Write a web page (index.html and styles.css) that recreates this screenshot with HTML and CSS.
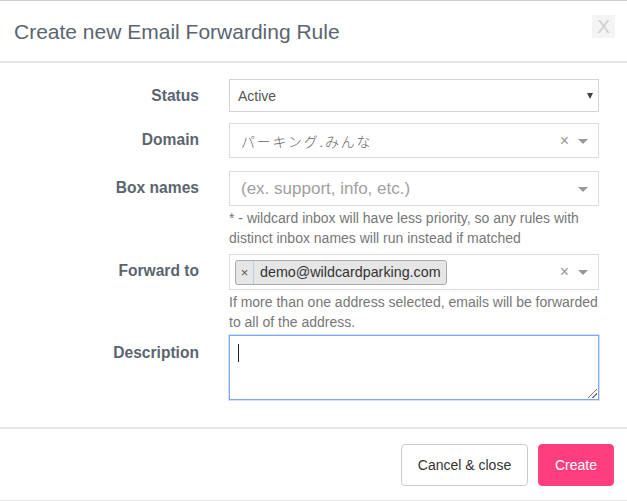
FILE: index.html
```html
<!DOCTYPE html>
<html>
<head>
<meta charset="utf-8">
<link rel="stylesheet" href="styles.css">
</head>
<body>
<div class="modal">
  <div class="modal-header">
    <h1 class="title">Create new Email Forwarding Rule</h1>
    <span class="close">X</span>
  </div>
  <div class="modal-body">
    <div class="row row-status">
      <label class="label">Status</label>
      <div class="field">
        <div class="select native">
          <span class="value">Active</span>
          <span class="native-arrow"></span>
        </div>
      </div>
    </div>
    <div class="row row-domain">
      <label class="label">Domain</label>
      <div class="field">
        <div class="select s2">
          <span class="value jp">パーキング.みんな</span>
          <span class="clear">×</span>
          <span class="arrow"></span>
        </div>
      </div>
    </div>
    <div class="row row-box">
      <label class="label">Box names</label>
      <div class="field">
        <div class="select s2">
          <span class="value placeholder">(ex. support, info, etc.)</span>
          <span class="arrow"></span>
        </div>
        <p class="help">* - wildcard inbox will have less priority, so any rules with distinct inbox names will run instead if matched</p>
      </div>
    </div>
    <div class="row row-forward">
      <label class="label">Forward to</label>
      <div class="field">
        <div class="select s2 multi">
          <span class="tag"><span class="tag-x">×</span><span class="tag-text">demo@wildcardparking.com</span></span>
          <span class="spacer"></span>
          <span class="clear">×</span>
          <span class="arrow"></span>
        </div>
        <p class="help">If more than one address selected, emails will be forwarded to all of the address.</p>
      </div>
    </div>
    <div class="row row-desc">
      <label class="label">Description</label>
      <div class="field">
        <div class="textarea"><span class="caret"></span><span class="grip"></span></div>
      </div>
    </div>
  </div>
  <div class="modal-footer">
    <button class="btn btn-cancel">Cancel &amp; close</button>
    <button class="btn btn-create">Create</button>
  </div>
</div>
</body>
</html>
```
FILE: styles.css
```css
* { box-sizing: border-box; }
html, body { margin: 0; padding: 0; background: #fff; }
body {
  font-family: "Liberation Sans", Arial, "Noto Sans CJK JP", sans-serif;
  width: 627px;
  height: 501px;
  overflow: hidden;
}
.modal {
  border-top: 1px solid #cfcfcf;
  border-bottom: 1px solid #e3e3e3;
  height: 501px;
  display: flex;
  flex-direction: column;
}
.modal-header {
  height: 62px;
  display: flex;
  align-items: center;
  justify-content: space-between;
  padding: 0 12px 0 14px;
  border-bottom: 2px solid #e6e6e6;
}
.title {
  margin: 0;
  font-weight: normal;
  font-size: 21px;
  color: #5b6570;
  padding-top: 2px;
}
.close {
  width: 23px;
  height: 23px;
  background: #f4f4f4;
  color: #cfcfcf;
  font-size: 19px;
  line-height: 23px;
  text-align: center;
  margin-top: -9px;
}
.modal-body {
  padding: 16px 0 0 0;
  flex: 1;
}
.row {
  display: flex;
  align-items: flex-start;
}
.label {
  width: 199px;
  text-align: right;
  font-weight: bold;
  font-size: 15.6px;
  color: #5b6570;
  margin-right: 30px;
}
.field {
  width: 370px;
}
.select {
  display: flex;
  align-items: center;
  border: 1px solid #ddd;
  background: #fff;
  font-size: 14px;
  color: #444;
}
.native {
  height: 33px;
  padding: 0 5px 0 8px;
  border-color: #d4d4d4;
}
.native .value { flex: 1; color: #555; }
.native-arrow {
  width: 0; height: 0;
  border-left: 3.5px solid transparent;
  border-right: 3.5px solid transparent;
  border-top: 6px solid #444;
}
.row-status .label { line-height: 33px; }
.row-domain { margin-top: 11px; }
.row-domain .label, .row-box .label, .row-forward .label { line-height: 34px; }
.s2 {
  height: 35px;
  padding: 0 10px 0 11px;
}
.s2 .value { flex: 1; }
.jp { color: #666; font-family: "Noto Sans CJK JP", "Liberation Sans", sans-serif; font-size: 14px; letter-spacing: 1.8px; font-weight: 300; }
.placeholder { color: #a0a0a0; font-size: 17px; }
.clear {
  color: #999;
  font-size: 16px;
  margin-right: 9px;
  line-height: 1;
}
.arrow {
  width: 0; height: 0;
  border-left: 5px solid transparent;
  border-right: 5px solid transparent;
  border-top: 5px solid #999;
  margin-top: 1px;
}
.row-box { margin-top: 13px; }
.help {
  margin: 2px 0 0 0;
  font-size: 14px;
  line-height: 20px;
  color: #777;
}
.row-forward { margin-top: 6px; }
.multi { padding-left: 5px; height: 36px; }
.spacer { flex: 1; }
.tag {
  display: flex;
  align-items: stretch;
  height: 25px;
  border: 1px solid #aaa;
  border-radius: 3px;
  background: #e6e6e6;
  font-size: 14.3px;
  color: #333;
}
.tag-x {
  width: 18px;
  text-align: center;
  font-size: 13px;
  line-height: 23px;
  color: #555;
  border-right: 1px solid #b8cde6;
}
.tag-text {
  padding: 0 5px 0 6px;
  line-height: 23px;
}
.row-desc { margin-top: 3px; }
.row-desc .label { line-height: 36px; }
.textarea {
  position: relative;
  height: 65px;
  border: 1px solid #7fa6f0;
  box-shadow: 0 0 0 1px rgba(127,166,240,0.35);
}
.caret {
  position: absolute;
  left: 8px;
  top: 8px;
  width: 1px;
  height: 18px;
  background: #222;
}
.grip {
  position: absolute;
  right: 1px;
  bottom: 1px;
  width: 9px;
  height: 9px;
  background: linear-gradient(135deg, transparent 45%, #777 45%, #777 53%, transparent 53%, transparent 70%, #777 70%, #777 78%, transparent 78%);
}
.modal-footer {
  height: 73px;
  border-top: 2px solid #e6e6e6;
  display: flex;
  justify-content: flex-end;
  align-items: center;
  gap: 10px;
  padding: 0 13px 0 0;
}
.btn {
  font-family: "Liberation Sans", Arial, sans-serif;
  font-size: 14px;
  height: 42px;
  border-radius: 4px;
  cursor: pointer;
}
.btn-cancel {
  width: 127px;
  background: #fff;
  border: 1px solid #ccc;
  color: #333;
}
.btn-create {
  width: 76px;
  background: #ff3e7f;
  border: 1px solid #ff3e7f;
  color: #fff;
}
```
